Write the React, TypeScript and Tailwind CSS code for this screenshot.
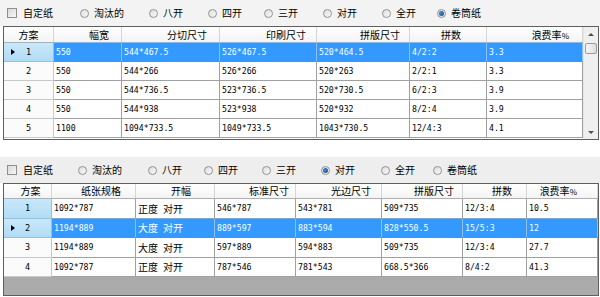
import React from "react";

const CJK = "font-['Noto_Sans_CJK_SC',sans-serif]";
const MONO = "font-['DejaVu_Sans_Mono','Noto_Sans_CJK_SC',monospace]";

type Opt = { label: string; kind: "check" | "radio"; checked?: boolean; w: string };

function Radio({ checked }: { checked?: boolean }) {
  return (
    <span className="flex h-[9px] w-[9px] shrink-0 items-center justify-center rounded-full border border-[#929292] bg-gradient-to-br from-[#dcdcdc] to-[#fbfbfb]">
      {checked ? <span className="h-[5px] w-[5px] rounded-full bg-[radial-gradient(circle_at_40%_40%,#3f8ed8,#0d3f78)]" /> : null}
    </span>
  );
}

function Check() {
  return <span className="h-[10px] w-[10px] shrink-0 border border-[#8f8f8f] bg-gradient-to-br from-[#d8d8d8] to-[#f8f8f8]" />;
}

function OptionBar({ opts, bg, h }: { opts: Opt[]; bg: string; h: string }) {
  return (
    <div className={`flex items-center pl-[7px] ${bg} ${h} ${CJK} text-[10px] text-black`}>
      {opts.map((o, i) => (
        <div key={i} className={`flex shrink-0 items-center ${o.w} ${o.kind === "check" ? "gap-[6px]" : "gap-[5px]"}`}>
          {o.kind === "check" ? <Check /> : <Radio checked={o.checked} />}
          <span className="leading-none">{o.label}</span>
        </div>
      ))}
    </div>
  );
}

const topOpts: Opt[] = [
  { label: "自定纸", kind: "check", w: "w-[73px]" },
  { label: "淘汰的", kind: "radio", w: "w-[69px]" },
  { label: "八开", kind: "radio", w: "w-[59px]" },
  { label: "四开", kind: "radio", w: "w-[56px]" },
  { label: "三开", kind: "radio", w: "w-[59px]" },
  { label: "对开", kind: "radio", w: "w-[59px]" },
  { label: "全开", kind: "radio", w: "w-[55px]" },
  { label: "卷筒纸", kind: "radio", checked: true, w: "w-[60px]" },
];

const botOpts: Opt[] = [
  { label: "自定纸", kind: "check", w: "w-[71px]" },
  { label: "淘汰的", kind: "radio", w: "w-[70px]" },
  { label: "八开", kind: "radio", w: "w-[56px]" },
  { label: "四开", kind: "radio", w: "w-[58px]" },
  { label: "三开", kind: "radio", w: "w-[59px]" },
  { label: "对开", kind: "radio", checked: true, w: "w-[60px]" },
  { label: "全开", kind: "radio", w: "w-[52px]" },
  { label: "卷筒纸", kind: "radio", w: "w-[60px]" },
];

type Col = { title: string; w: string; pr: string };

const topCols: Col[] = [
  { title: "幅宽", w: "w-[68px]", pr: "pr-[12px]" },
  { title: "分切尺寸", w: "w-[98px]", pr: "pr-[12px]" },
  { title: "印刷尺寸", w: "w-[97px]", pr: "pr-[10px]" },
  { title: "拼版尺寸", w: "w-[93px]", pr: "pr-[9px]" },
  { title: "拼数", w: "w-[77px]", pr: "pr-[25px]" },
  { title: "浪费率%", w: "w-[96px]", pr: "pr-[13px]" },
];

const botCols: Col[] = [
  { title: "纸张规格", w: "w-[84px]", pr: "pr-[14px]" },
  { title: "开幅", w: "w-[79px]", pr: "pr-[23px]" },
  { title: "标准尺寸", w: "w-[81px]", pr: "pr-[6px]" },
  { title: "光边尺寸", w: "w-[86px]", pr: "pr-[10px]" },
  { title: "拼版尺寸", w: "w-[81px]", pr: "pr-[8px]" },
  { title: "拼数", w: "w-[64px]", pr: "pr-[14px]" },
  { title: "浪费率%", w: "w-[71px]", pr: "pr-[20px]" },
];

const topRows = [
  ["550", "544*467.5", "526*467.5", "520*464.5", "4/2:2", "3.3"],
  ["550", "544*266", "526*266", "520*263", "2/2:1", "3.3"],
  ["550", "544*736.5", "523*736.5", "520*730.5", "6/2:3", "3.9"],
  ["550", "544*938", "523*938", "520*932", "8/2:4", "3.9"],
  ["1100", "1094*733.5", "1049*733.5", "1043*730.5", "12/4:3", "4.1"],
];

const botRows = [
  ["1092*787", "正度 对开", "546*787", "543*781", "509*735", "12/3:4", "10.5"],
  ["1194*889", "大度 对开", "889*597", "883*594", "828*550.5", "15/5:3", "12"],
  ["1194*889", "大度 对开", "597*889", "594*883", "509*735", "12/3:4", "27.7"],
  ["1092*787", "正度 对开", "787*546", "781*543", "668.5*366", "8/4:2", "41.3"],
];

function CellText({ text }: { text: string }) {
  if (/[\u4e00-\u9fff]/.test(text)) {
    const parts = text.split(" ");
    return (
      <span className={`${CJK} text-[10px] leading-none`}>
        {parts[0]}
        <span className="inline-block w-[5px]" />
        {parts[1]}
      </span>
    );
  }
  return <span className={`${MONO} text-[8.2px] leading-none`}>{text}</span>;
}

function HeaderCell({ c }: { c: Col }) {
  return (
    <div className={`flex h-full shrink-0 items-center justify-end border-r border-[#d6d6d6] ${c.w} ${c.pr} ${CJK} text-[10px] leading-none text-black`}>
      {c.title.endsWith("%") ? (
        <span>
          {c.title.slice(0, -1)}
          <span className="text-[8px]">%</span>
        </span>
      ) : (
        c.title
      )}
    </div>
  );
}

function RowHeader({ n, w, selected, tinted }: { n: number; w: string; selected?: boolean; tinted?: boolean }) {
  return (
    <div
      className={`flex h-full shrink-0 items-center border-r border-b ${w} ${
        tinted ? "border-[#8fc3e6] bg-gradient-to-b from-[#c9e8fa] to-[#b2dcf5]" : "border-[#c8c8c8] bg-[#fbfbfb]"
      }`}
    >
      <span className="ml-[7px] flex w-[4px] shrink-0 items-center">
        {selected ? <span className="h-0 w-0 border-y-[3.5px] border-l-[4px] border-y-transparent border-l-black" /> : null}
      </span>
      <span className={`flex-1 pr-[11px] text-center ${MONO} text-[8.5px] leading-none text-black`}>{n}</span>
    </div>
  );
}

function DataRow({
  cells,
  cols,
  idx,
  selected,
  tinted,
  rhw,
  h,
}: {
  cells: string[];
  cols: Col[];
  idx: number;
  selected?: boolean;
  tinted?: boolean;
  rhw: string;
  h: string;
}) {
  return (
    <div className={`flex ${h}`}>
      <RowHeader n={idx} w={rhw} selected={selected} tinted={tinted} />
      {cells.map((t, i) => (
        <div
          key={i}
          className={`flex h-full shrink-0 items-center border-r border-b pl-[2px] ${cols[i].w} ${
            selected ? "border-r-[#8ec0f2] border-b-[#3399ff] bg-[#3399ff] text-white" : "border-[#a0a0a0] bg-white text-black"
          }`}
        >
          <CellText text={t} />
        </div>
      ))}
    </div>
  );
}

function Scrollbar() {
  return (
    <div className="flex w-[15px] shrink-0 flex-col border-l border-[#e6e6e6] bg-[#efefef]">
      <div className="flex h-[14px] items-center justify-center">
        <span className="h-0 w-0 border-x-[3px] border-b-[3px] border-x-transparent border-b-[#505050]" />
      </div>
      <div className="ml-[1px] mt-[2px] h-[11px] w-[12px] rounded-[2px] border border-[#9c9c9c] bg-gradient-to-r from-[#f6f6f6] to-[#dedede]" />
      <div className="flex-1" />
      <div className="flex h-[14px] items-center justify-center">
        <span className="h-0 w-0 border-x-[3px] border-t-[3px] border-x-transparent border-t-[#505050]" />
      </div>
    </div>
  );
}

export default function App() {
  const rowH1 = ["h-[19px]", "h-[19px]", "h-[19px]", "h-[19px]", "h-[19px]"];
  const rowH2 = ["h-[20px]", "h-[19px]", "h-[20px]", "h-[19px]"];
  return (
    <div className="h-[297px] w-[600px] overflow-hidden bg-white">
      <OptionBar opts={topOpts} bg="bg-[#f3f3f3]" h="h-[26px]" />
      {/* Top grid */}
      <div className="ml-[3px] flex h-[114px] w-[596px] border border-[#5f5f5f] bg-white">
        <div className="flex w-[579px] flex-col">
          <div className="flex h-[16px] shrink-0 border-b border-[#b0b0b0] bg-gradient-to-b from-white to-[#f4f4f4]">
            <div className={`flex h-full w-[50px] shrink-0 items-center justify-center border-r border-[#d6d6d6] ${CJK} text-[10px] leading-none`}>方案</div>
            {topCols.map((c, i) => (
              <HeaderCell key={i} c={c} />
            ))}
          </div>
          {topRows.map((r, i) => (
            <DataRow key={i} cells={r} cols={topCols} idx={i + 1} selected={i === 0} tinted={i === 0} rhw="w-[50px]" h={rowH1[i]} />
          ))}
          <div className="flex-1 bg-white" />
        </div>
        <Scrollbar />
      </div>
      <div className="h-[17px] bg-white" />
      <OptionBar opts={botOpts} bg="bg-[#eeeeee]" h="h-[26px]" />
      {/* Bottom grid */}
      <div className="ml-[3px] flex h-[113px] w-[596px] flex-col border border-[#5f5f5f] bg-[#ababab]">
        <div className="flex h-[15px] shrink-0 border-b border-[#b0b0b0] bg-gradient-to-b from-white to-[#f4f4f4]">
          <div className={`flex h-full w-[48px] shrink-0 items-center justify-center border-r border-[#d6d6d6] pl-[6px] ${CJK} text-[10px] leading-none`}>方案</div>
          {botCols.map((c, i) => (
            <HeaderCell key={i} c={c} />
          ))}
        </div>
        {botRows.map((r, i) => (
          <DataRow key={i} cells={r} cols={botCols} idx={i + 1} selected={i === 1} tinted={i <= 1} rhw="w-[48px]" h={rowH2[i]} />
        ))}
        <div className="flex-1" />
      </div>
    </div>
  );
}
